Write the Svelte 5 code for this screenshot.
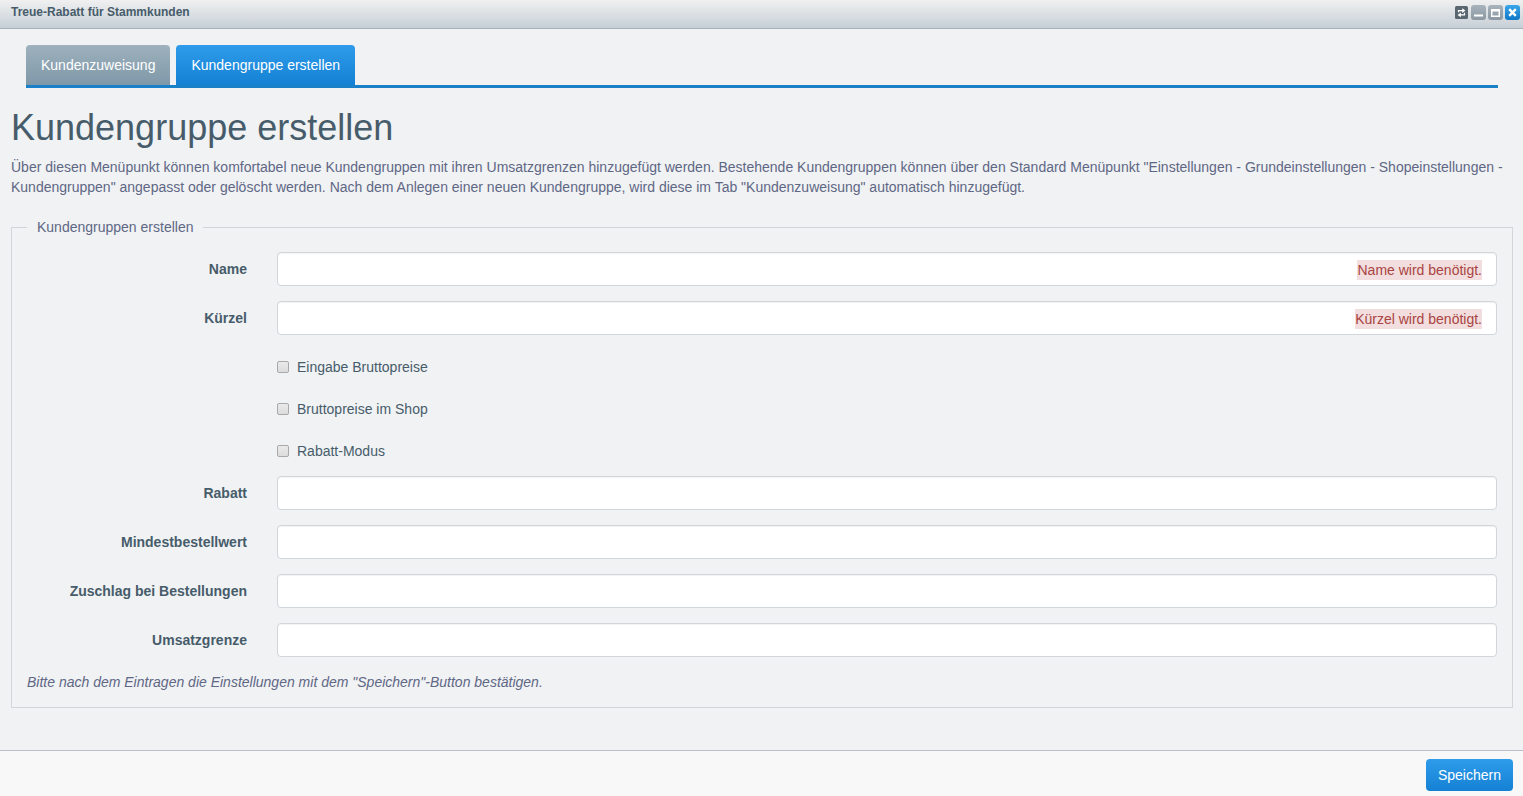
<script>
  let activeTab = $state('create');

  const tabs = [
    { id: 'assign', label: 'Kundenzuweisung' },
    { id: 'create', label: 'Kundengruppe erstellen' }
  ];

  const fields = [
    { id: 'name', label: 'Name', type: 'text', required: true },
    { id: 'key', label: 'Kürzel', type: 'text', required: true },
    { id: 'taxInput', label: 'Eingabe Bruttopreise', type: 'checkbox' },
    { id: 'tax', label: 'Bruttopreise im Shop', type: 'checkbox' },
    { id: 'mode', label: 'Rabatt-Modus', type: 'checkbox' },
    { id: 'discount', label: 'Rabatt', type: 'text' },
    { id: 'minimumOrder', label: 'Mindestbestellwert', type: 'text' },
    { id: 'surcharge', label: 'Zuschlag bei Bestellungen', type: 'text' },
    { id: 'limit', label: 'Umsatzgrenze', type: 'text' }
  ];

  let values = $state({
    name: '',
    key: '',
    taxInput: false,
    tax: false,
    mode: false,
    discount: '',
    minimumOrder: '',
    surcharge: '',
    limit: ''
  });
</script>

<div class="window">
  <header class="titlebar">
    <span class="title">Treue-Rabatt für Stammkunden</span>
    <div class="tools">
      <button type="button" aria-label="Neu laden">
        <svg viewBox="0 0 15 15">
          <rect x="1" y="1" width="13" height="13" rx="1.5" fill="#5a6770" />
          <path d="M4.5 7.3V5.6H9M10.5 7.7v2.2H6" fill="none" stroke="#fff" stroke-width="1.2" />
          <path d="M8.2 3.2 11.4 5.6 8.2 8zM6.8 7.5 3.6 9.9l3.2 2.4z" fill="#fff" />
        </svg>
      </button>
      <button type="button" aria-label="Minimieren">
        <svg viewBox="0 0 15 15">
          <rect width="15" height="15" rx="3" fill="url(#grayTool)" />
          <rect x="3" y="9.5" width="9" height="2" fill="#fff" />
        </svg>
      </button>
      <button type="button" aria-label="Maximieren">
        <svg viewBox="0 0 15 15">
          <rect width="15" height="15" rx="3" fill="url(#grayTool)" />
          <path d="M3 4h9v8H3zM4.5 6.5v4h6v-4z" fill="#fff" fill-rule="evenodd" />
        </svg>
      </button>
      <button type="button" aria-label="Schließen">
        <svg viewBox="0 0 15 15">
          <defs>
            <linearGradient id="grayTool" x1="0" y1="0" x2="0" y2="1">
              <stop offset="0" stop-color="#a8b3bc" />
              <stop offset="1" stop-color="#8b98a2" />
            </linearGradient>
            <linearGradient id="blueTool" x1="0" y1="0" x2="0" y2="1">
              <stop offset="0" stop-color="#3ba6e8" />
              <stop offset="1" stop-color="#0c78c8" />
            </linearGradient>
          </defs>
          <rect width="15" height="15" rx="3" fill="url(#blueTool)" />
          <path d="M4.2 4.2l6.6 6.6M10.8 4.2l-6.6 6.6" stroke="#fff" stroke-width="2.4" />
        </svg>
      </button>
    </div>
  </header>

  <main>
    <nav class="tabs">
      {#each tabs as tab}
        <button type="button" class:active={activeTab === tab.id} onclick={() => (activeTab = tab.id)}>
          {tab.label}
        </button>
      {/each}
    </nav>

    <h1>Kundengruppe erstellen</h1>
    <p class="intro">
      Über diesen Menüpunkt können komfortabel neue Kundengruppen mit ihren Umsatzgrenzen hinzugefügt werden. Bestehende Kundengruppen können über den Standard Menüpunkt "Einstellungen - Grundeinstellungen - Shopeinstellungen - Kundengruppen" angepasst oder gelöscht werden. Nach dem Anlegen einer neuen Kundengruppe, wird diese im Tab "Kundenzuweisung" automatisch hinzugefügt.
    </p>

    <form id="groupForm" onsubmit={(e) => e.preventDefault()}>
      <fieldset>
        <legend>Kundengruppen erstellen</legend>
        {#each fields as field}
          <div class="row">
            {#if field.type === 'checkbox'}
              <div class="control check">
                <input type="checkbox" id={field.id} bind:checked={values[field.id]} />
                <label for={field.id}>{field.label}</label>
              </div>
            {:else}
              <label class="name" for={field.id}>{field.label}</label>
              <div class="control">
                <input type="text" id={field.id} bind:value={values[field.id]} />
                {#if field.required && !values[field.id]}
                  <span class="error">{field.label} wird benötigt.</span>
                {/if}
              </div>
            {/if}
          </div>
        {/each}
        <p class="note">Bitte nach dem Eintragen die Einstellungen mit dem "Speichern"-Button bestätigen.</p>
      </fieldset>
    </form>
  </main>

  <footer>
    <button type="submit" form="groupForm" class="save">Speichern</button>
  </footer>
</div>

<style>
  .window {
    display: flex;
    flex-direction: column;
    min-height: 100vh;
    background: #f0f2f4;
    color: #5f6784;
    font-family: "Liberation Sans", Arial, sans-serif;
    font-size: 14px;
    line-height: 20px;
  }
  .window * {
    box-sizing: border-box;
  }
  button,
  input {
    font: inherit;
  }
  button {
    border: none;
    cursor: pointer;
  }

  .titlebar {
    display: flex;
    justify-content: space-between;
    align-items: center;
    padding: 2px 3px 6px 11px;
    background: linear-gradient(#f0f0f1, #c6cfd6);
    border-bottom: 1px solid #a5b2bc;
  }
  .title {
    color: #475c6a;
    font-size: 12px;
    font-weight: bold;
  }
  .tools {
    display: flex;
    gap: 2px;
  }
  .tools button {
    width: 15px;
    height: 15px;
    padding: 0;
    background: none;
  }
  .tools svg {
    display: block;
  }

  main {
    flex: 1;
    padding: 16px 10px 20px 11px;
  }
  .tabs {
    display: flex;
    gap: 6px;
    margin: 0 15px;
    border-bottom: 3px solid #1a80c8;
  }
  .tabs button {
    padding: 10px 15px;
    border-radius: 4px 4px 0 0;
    background: linear-gradient(#9eb1bd, #7f98a8);
    color: #fff;
  }
  .tabs button.active {
    background: linear-gradient(#2f9bea, #1581d4);
  }

  h1 {
    margin: 20px 0 9px;
    color: #475c6a;
    font-size: 36px;
    font-weight: normal;
    line-height: 40px;
  }
  .intro {
    margin: 0 0 20px;
  }

  fieldset {
    margin: 0;
    padding: 15px;
    border: 1px solid #d1d6db;
  }
  legend {
    padding: 0 10px;
  }
  .row {
    display: grid;
    grid-template-columns: 1fr 5fr;
    margin: 0 -15px 15px;
  }
  .name {
    padding: 7px 15px;
    color: #475c6a;
    font-weight: bold;
    text-align: right;
  }
  .control {
    position: relative;
    grid-column: 2;
    padding: 0 15px;
  }
  input[type='text'] {
    display: block;
    width: 100%;
    height: 34px;
    padding: 6px 12px;
    border: 1px solid #d1d6db;
    border-radius: 4px;
    background: #fff;
    color: #475c6a;
    box-shadow: inset 0 1px 1px rgba(0, 0, 0, 0.05);
  }
  .error {
    position: absolute;
    top: 8px;
    right: 30px;
    background: #f2dede;
    color: #a94442;
  }
  .check {
    display: flex;
    align-items: center;
    gap: 8px;
    padding-top: 7px;
    color: #475c6a;
  }
  input[type='checkbox'] {
    appearance: none;
    width: 12px;
    height: 12px;
    margin: 0;
    border: 1px solid #a9a9a9;
    border-radius: 2px;
    background: linear-gradient(#eaeaea, #dcdcdc);
  }
  input[type='checkbox']:checked {
    background: #1581d4;
  }
  .note {
    margin: 0;
    font-style: italic;
  }

  footer {
    display: flex;
    justify-content: flex-end;
    padding: 8px 10px 5px;
    border-top: 1px solid #b9c0ca;
    background: #f8f8f8;
  }
  .save {
    padding: 6px 12px;
    border-radius: 4px;
    background: linear-gradient(#2f9bea, #1581d4);
    color: #fff;
  }
</style>
